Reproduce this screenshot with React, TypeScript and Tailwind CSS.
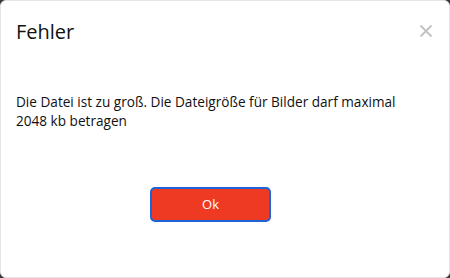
import React from "react";

export default function App() {
  return (
    <div className="w-[450px] h-[278px] bg-[#3a3a3a]" style={{ fontFamily: '"Open Sans", sans-serif' }}>
      <div className="w-full h-full bg-white rounded-[6px] border border-[#e5e5e5] flex flex-col">
        <div className="flex items-start justify-between pl-[15px] pr-[16px] pt-[17px]">
          <h1 className="text-[20px] leading-[28px] text-[#111]">Fehler</h1>
          <svg width="14" height="14" viewBox="0 0 14 14" className="mt-[6px]">
            <path d="M1.5 1.5L12.5 12.5M12.5 1.5L1.5 12.5" stroke="#c4c4c4" strokeWidth="2" />
          </svg>
        </div>
        <p className="mt-[46px] pl-[15px] w-[405px] text-[13.6px] leading-[19px] text-[#111]">
          Die Datei ist zu groß. Die Dateigröße für Bilder darf maximal 2048 kb betragen
        </p>
        <div className="mt-[57px] flex justify-center pr-[29px]">
          <button className="w-[121px] h-[35px] rounded-[5px] border-2 border-[#1f63d6] bg-[#ef3a23] text-white text-[13px]">
            Ok
          </button>
        </div>
      </div>
    </div>
  );
}
